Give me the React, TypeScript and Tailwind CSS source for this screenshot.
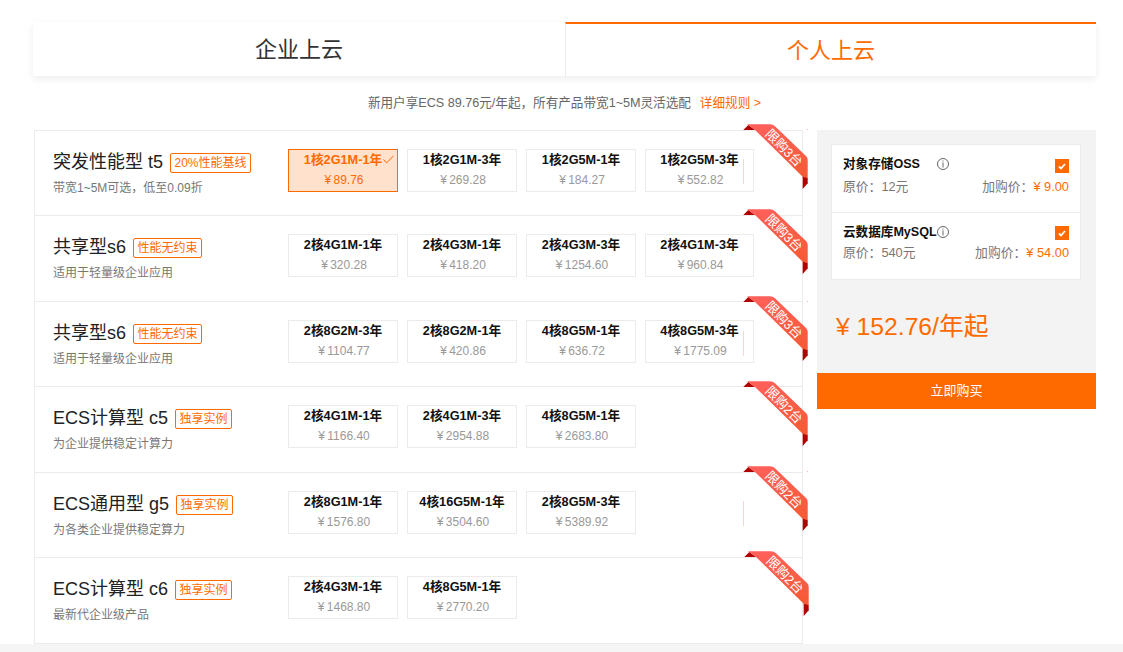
import React from "react";

type Sku = { spec: string; price: string; active?: boolean };
type Row = {
  title: string;
  tag: string;
  sub: string;
  limit: string;
  height: string;
  ribbon: string;
  artifact?: boolean;
  skus: Sku[];
};

const rows: Row[] = [
  {
    title: "突发性能型 t5",
    tag: "20%性能基线",
    sub: "带宽1~5M可选，低至0.09折",
    limit: "限购3台",
    height: "h-[85px]",
    ribbon: "-right-[7px] -top-[7px]",
    artifact: true,
    skus: [
      { spec: "1核2G1M-1年", price: "¥ 89.76", active: true },
      { spec: "1核2G1M-3年", price: "¥ 269.28" },
      { spec: "1核2G5M-1年", price: "¥ 184.27" },
      { spec: "1核2G5M-3年", price: "¥ 552.82" },
    ],
  },
  {
    title: "共享型s6",
    tag: "性能无约束",
    sub: "适用于轻量级企业应用",
    limit: "限购3台",
    height: "h-[86px]",
    ribbon: "-right-[7px] -top-[7px]",
    skus: [
      { spec: "2核4G1M-1年", price: "¥ 320.28" },
      { spec: "2核4G3M-1年", price: "¥ 418.20" },
      { spec: "2核4G3M-3年", price: "¥ 1254.60" },
      { spec: "2核4G1M-3年", price: "¥ 960.84" },
    ],
  },
  {
    title: "共享型s6",
    tag: "性能无约束",
    sub: "适用于轻量级企业应用",
    limit: "限购3台",
    height: "h-[85px]",
    ribbon: "-right-[7px] -top-[6px]",
    artifact: true,
    skus: [
      { spec: "2核8G2M-3年", price: "¥ 1104.77" },
      { spec: "2核8G2M-1年", price: "¥ 420.86" },
      { spec: "4核8G5M-1年", price: "¥ 636.72" },
      { spec: "4核8G5M-3年", price: "¥ 1775.09" },
    ],
  },
  {
    title: "ECS计算型 c5",
    tag: "独享实例",
    sub: "为企业提供稳定计算力",
    limit: "限购2台",
    height: "h-[86px]",
    ribbon: "-right-[7px] -top-[6px]",
    skus: [
      { spec: "2核4G1M-1年", price: "¥ 1166.40" },
      { spec: "2核4G1M-3年", price: "¥ 2954.88" },
      { spec: "4核8G5M-1年", price: "¥ 2683.80" },
    ],
  },
  {
    title: "ECS通用型 g5",
    tag: "独享实例",
    sub: "为各类企业提供稳定算力",
    limit: "限购2台",
    height: "h-[85px]",
    ribbon: "-right-[7px] -top-[7px]",
    artifact: true,
    skus: [
      { spec: "2核8G1M-1年", price: "¥ 1576.80" },
      { spec: "4核16G5M-1年", price: "¥ 3504.60" },
      { spec: "2核8G5M-3年", price: "¥ 5389.92" },
    ],
  },
  {
    title: "ECS计算型 c6",
    tag: "独享实例",
    sub: "最新代企业级产品",
    limit: "限购2台",
    height: "h-[86px]",
    ribbon: "-right-[8px] -top-[7px]",
    skus: [
      { spec: "2核4G3M-1年", price: "¥ 1468.80" },
      { spec: "4核8G5M-1年", price: "¥ 2770.20" },
    ],
  },
];

function Ribbon({ text, className, artifact, id }: { text: string; className: string; artifact?: boolean; id: string }) {
  return (
    <svg width="66" height="66" viewBox="0 0 66 66" className={`absolute ${className}`}>
      <defs>
        <linearGradient id={id} x1="0" y1="0" x2="0" y2="1">
          <stop offset="0" stopColor="#ff605a" />
          <stop offset="1" stopColor="#f55a33" />
        </linearGradient>
      </defs>
      <path d="M0.3 6 L5.3 1 L12 6 Z" fill="#b00000" />
      <path d="M59.7 51 L64.7 54 L64.7 59.3 L59.7 65 Z" fill="#b00000" />
      <path
        d="M3.7 0.3 L27 0.3 Q30 0.3 32 2.3 L63 32 Q64.7 33.7 64.7 36 L64.7 54.3 L59.7 52.7 L12 6 L5.3 1 Z"
        fill={`url(#${id})`}
      />
      <text
        x="41"
        y="24"
        fill="#ffffff"
        fontSize="13"
        textAnchor="middle"
        dominantBaseline="central"
        transform="rotate(45 41 24)"
      >
        {text}
      </text>
      {artifact && (
        <>
          <rect x="0" y="35" width="1" height="25" fill="#f7d5d2" />
          <rect x="64" y="5" width="1" height="1" fill="#f4b5ae" />
        </>
      )}
    </svg>
  );
}

function Card({ sku }: { sku: Sku }) {
  return (
    <div
      className={`relative h-[43px] w-[110px] nth-[4]:w-[109px] border text-center ${
        sku.active ? "border-[#ff6a00] bg-[#ffe1cc] text-[#ff6a00]" : "border-[#ebebeb] bg-white"
      }`}
    >
      <div className={`text-[12.7px] font-bold leading-[20px] ${sku.active ? "text-[#ff6a00]" : "text-[#111111]"}`}>
        {sku.spec}
      </div>
      <div
        className={`mt-[2px] pl-[2px] text-[12px] leading-[16px] [word-spacing:-1px] ${
          sku.active ? "text-[#ff6a00]" : "text-[#999999]"
        }`}
      >
        {sku.price}
      </div>
      {sku.active && (
        <svg width="11" height="9" viewBox="0 0 11 9" className="absolute left-[94px] top-[5px]" fill="none">
          <path d="M0.5 4.5 L3.5 8 L10.5 0.8" stroke="#ff6a00" strokeWidth="1" />
        </svg>
      )}
    </div>
  );
}

function InfoIcon() {
  return (
    <svg width="12" height="12" viewBox="0 0 12 12" fill="none" className="shrink-0">
      <circle cx="6" cy="6" r="5.5" stroke="#666666" strokeWidth="1" />
      <rect x="5.5" y="2.5" width="1" height="1" fill="#666666" />
      <rect x="5.5" y="4.5" width="1" height="5" fill="#666666" />
    </svg>
  );
}

function CheckBox() {
  return (
    <span className="flex h-[14px] w-[14px] items-center justify-center bg-[#ff6a00]">
      <svg width="8" height="7" viewBox="0 0 8 7" fill="none">
        <path d="M1 3.5 L3 5.5 L7 1" stroke="#ffffff" strokeWidth="1.8" />
      </svg>
    </span>
  );
}

function Addon({
  name,
  orig,
  add,
  className,
  priceGap,
  checkGap,
}: {
  name: string;
  orig: string;
  add: string;
  className: string;
  priceGap: string;
  checkGap: string;
}) {
  return (
    <div className={`px-[11px] pt-[10px] ${className}`}>
      <div className="flex items-start justify-between">
        <div className="flex h-[18px] items-center">
          <span className="w-[94px] whitespace-nowrap text-[12.6px] font-semibold leading-[18px] text-[#111111]">{name}</span>
          <InfoIcon />
        </div>
        <div className={checkGap}>
          <CheckBox />
        </div>
      </div>
      <div className={`flex justify-between text-[12.8px] leading-[18px] text-[#777777] ${priceGap}`}>
        <span>原价：{orig}</span>
        <span>
          加购价：<span className="text-[#ff6a00]">{add}</span>
        </span>
      </div>
    </div>
  );
}

export default function App() {
  return (
    <div className="flex h-[652px] flex-col overflow-hidden bg-white font-['Liberation_Sans','Noto_Sans_CJK_SC',sans-serif]">
      <div className="pl-[33px] pt-[22px]">
        <div className="flex h-[54px] w-[1063px] shadow-[0_3px_8px_rgba(0,0,0,0.07)]">
          <div className="flex w-[532px] items-center justify-center bg-white text-[22px] text-[#333333]">企业上云</div>
          <div className="flex w-[531px] items-center justify-center border-l border-t-2 border-l-[#ebebeb] border-t-[#ff6a00] bg-white text-[22px] text-[#ff6a00]">
            个人上云
          </div>
        </div>

        <div className="flex h-[54px] w-[1063px] items-center justify-center whitespace-pre text-[12.6px] text-[#666666]">
          新用户享ECS 89.76元/年起，所有产品带宽1~5M灵活选配<span className="ml-[9px] text-[#ff6a00]">详细规则 &gt;</span>
        </div>

        <div className="ml-px flex items-start">
          <div className="w-[769px] border-b border-l border-r border-[#ebebeb]">
            {rows.map((row, i) => (
              <div key={i} className={`relative flex border-t border-[#ebebeb] ${row.height}`}>
                <div className="w-[253px] pl-[18px] pt-[19px]">
                  <div className="flex h-[24px] items-center gap-[7px]">
                    <span className="whitespace-nowrap text-[18px] leading-[24px] text-[#222222]">{row.title}</span>
                    <span className="mt-[2px] flex h-[20px] items-center rounded-[2px] border border-[#ff6a00] px-[3.5px] text-[12px] whitespace-nowrap text-[#ff6a00]">
                      {row.tag}
                    </span>
                  </div>
                  <div className="mt-[5px] whitespace-nowrap text-[12px] leading-[18px] text-[#777777]">{row.sub}</div>
                </div>
                <div className="flex gap-[9px] pt-[18px]">
                  {row.skus.map((sku, j) => (
                    <Card key={j} sku={sku} />
                  ))}
                </div>
                <Ribbon text={row.limit} className={row.ribbon} artifact={row.artifact} id={`ribbon-${i}`} />
              </div>
            ))}
          </div>

          <div className="ml-[14px] w-[279px]">
            <div className="h-[243px] bg-[#f3f3f3] px-[14px] pt-[14px]">
              <div className="h-[136px] w-[250px] border border-[#ebebeb] bg-white">
                <Addon
                  name="对象存储OSS"
                  orig="12元"
                  add="¥ 9.00"
                  className="h-[68px] border-b border-[#ebebeb]"
                  priceGap="mt-[5px]"
                  checkGap="mt-[4px]"
                />
                <Addon
                  name="云数据库MySQL"
                  orig="540元"
                  add="¥ 54.00"
                  className="h-[66px]"
                  priceGap="mt-[3px]"
                  checkGap="mt-[3px]"
                />
              </div>
              <div className="flex h-[93px] items-center pl-[5px] text-[24.7px] text-[#ff6a00]">¥ 152.76/年起</div>
            </div>
            <div className="flex h-[36px] items-center justify-center bg-[#ff6a00] text-[13px] text-white">立即购买</div>
          </div>
        </div>
      </div>
      <div className="flex-1 bg-[#f5f5f5]" />
    </div>
  );
}
